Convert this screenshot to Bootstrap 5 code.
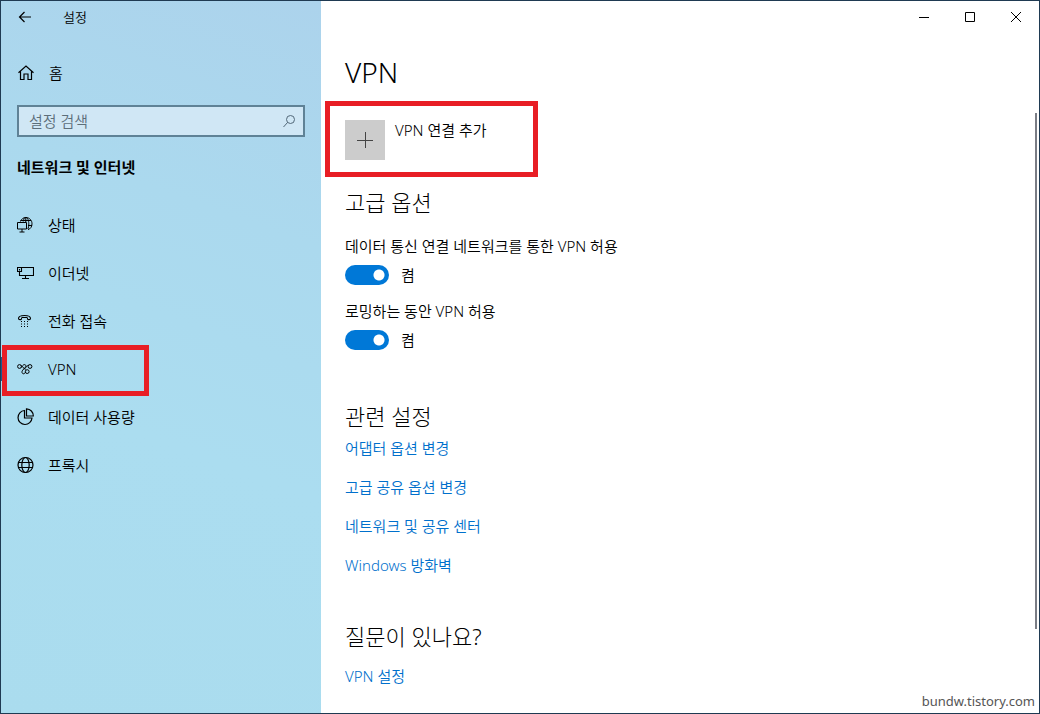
<!DOCTYPE html>
<html lang="ko">
<head>
<meta charset="utf-8">
<meta name="viewport" content="width=device-width, initial-scale=1">
<title>설정 - VPN</title>
<link href="https://cdn.jsdelivr.net/npm/bootstrap@5.3.0/dist/css/bootstrap.min.css" rel="stylesheet">
<style>
  body { font-family: "Noto Sans", "Noto Sans CJK KR", sans-serif; font-size: 15px; font-weight: 350; line-height: 24px; color: #000; background: #fff; }
  svg { display: block; flex: none; fill: none; stroke: currentColor; }
  .app-window { border: 1px solid #1f3a52; }
  .side-pane { width: 320px; background: linear-gradient(200deg, #acd3ec 0%, #abd9ee 30%, #abddf0 60%, #aadcee 100%); }
  .title-row { height: 32px; font-size: 13px; }
  .icon-btn { color: inherit; background: none; border: 0; padding: 0; font-weight: inherit; }
  .back-btn { width: 48px; height: 32px; }
  .back-title { margin-left: 14px; }
  .caption-btn { width: 46px; height: 32px; }
  .side-link { height: 48px; padding-left: 16px; gap: 14px; color: #000; text-decoration: none; }
  .search-box { height: 32px; border: 2px solid #5f8296; background: #d0e7f5; }
  .search-box input { color: #000; background: none; border: 0; outline: 0; padding: 0 10px; font-weight: inherit; }
  .search-box input::placeholder { color: #5c6e7a; opacity: 1; }
  .side-heading { font-size: 15px; font-weight: 700; height: 60px; }
  .frame { position: absolute; border: 5px solid #e81e25; pointer-events: none; }
  .frame-nav { inset: 0 auto -3px 1px; width: 147px; }
  .frame-add { inset: -19px auto -17px -20px; width: 213px; }
  .active-bar { position: absolute; left: 0; top: 12px; width: 4px; height: 24px; background: #165c93; }
  .content-pane { padding: 19px 24px 16px; }
  h1 { font-size: 28px; font-weight: 350; line-height: 40px; }
  h2 { font-size: 22px; font-weight: 300; line-height: 32px; margin: 0; }
  .add-tile { width: 40px; height: 40px; background: #ccc; }
  .add-btn { gap: 10px; margin: 28px 0 26px; line-height: 20px; }
  .switch-row { height: 34px; gap: 12px; }
  .switch-row .form-check-input { width: 44px; height: 20px; margin: 0; border: 0; background: #0078d7 radial-gradient(circle at 34px 10px, #fff 5px, transparent 6px); border-radius: 10px; }
  .option { margin-bottom: 7px; }
  .pane-section { margin-bottom: 43px; }
  .links { gap: 15px; }
  .links a { color: #0070cc; text-decoration: none; }
  .help-links { margin-top: 12px; }
  .scroll-thumb { position: absolute; right: 2px; top: 112px; bottom: 84px; width: 2px; background: #7a7d85; }
  .watermark { position: absolute; right: 4px; bottom: 0; font-size: 13px; font-weight: 400; color: #555; }
</style>
</head>
<body>
<div class="app-window d-flex min-vh-100 position-relative">
  <aside class="side-pane flex-shrink-0">
    <header class="title-row d-flex align-items-center">
      <button class="icon-btn back-btn d-flex align-items-center justify-content-center" aria-label="뒤로">
        <svg width="14" height="12" viewBox="0 0 14 12" stroke-width="1.2"><path d="M13 6H1.500M6.500 1l-5 5 5 5"/></svg>
      </button>
      <span class="back-title">설정</span>
    </header>
    <a href="#" class="side-link d-flex align-items-center mt-3">
      <svg width="18" height="18" viewBox="0 0 18 18" stroke-width="1.2"><path d="M1.500 8.700 9 2l7.500 6.700M3.500 7.500v8h3.500v-5.500h4v5.500h3.500v-8"/></svg>
      <span>홈</span>
    </a>
    <div class="search-box d-flex align-items-center mx-3 mt-2">
      <input type="search" class="flex-grow-1 w-100" placeholder="설정 검색" aria-label="설정 검색">
      <button class="icon-btn me-2" aria-label="검색">
        <svg width="12" height="13" viewBox="0 0 12 13" style="stroke:#526878"><circle cx="7.500" cy="4.500" r="4"/><path d="M4.700 7.300.5 12"/></svg>
      </button>
    </div>
    <div class="side-heading d-flex align-items-center px-3 mb-1">네트워크 및 인터넷</div>
    <nav>
      <a href="#" class="side-link d-flex align-items-center">
        <svg width="17" height="18" viewBox="0 0 17 18"><path d="M3.500 5.500C4.500 3 6.300 1.500 8.800 1.500c3.700 0 6.200 2.800 6.200 6.300 0 3-1.500 5-4 5.900M6.200 5.500c.5-2.500 1.300-4 2.600-4 1.800 0 3 2.800 3 6.300 0 2.200-.3 4-1 5.200M3.500 4.500h10.500M11 9.500h4M8.800 1.500V6M.5 6.500h9v6.500h-9zM5 13v3M2.500 16h5"/></svg>
        <span>상태</span>
      </a>
      <a href="#" class="side-link d-flex align-items-center">
        <svg width="17" height="18" viewBox="0 0 17 18" stroke-width="1.100"><path d="M5 3.500h11.500v8h-14V8M.5 3.500h4v4h-4zM2.500 5v1.500M8.500 12v2.500M5 14.500h7"/></svg>
        <span>이더넷</span>
      </a>
      <a href="#" class="side-link d-flex align-items-center">
        <svg width="17" height="18" viewBox="0 0 17 18" stroke-width="1.100"><path d="M1.500 6.500C1.500 4.500 4 3.500 7.500 3.500s6 1 6 3c0 1.500-3 1.500-3 .3 0-.8-.2-1.300-.7-1.300H5.200c-.5 0-.7.5-.7 1.300 0 1.200-3 1.200-3-.3z"/><path stroke-dasharray="1 2" d="M4 9.500h8M4 12h8M4 14.500h8"/></svg>
        <span>전화 접속</span>
      </a>
      <a href="#" class="side-link d-flex align-items-center position-relative" aria-current="page">
        <span class="active-bar"></span>
        <svg width="17" height="18" viewBox="0 0 17 18"><circle cx="2.500" cy="6.500" r="1.900"/><circle cx="13" cy="6.500" r="1.900"/><path d="M4.200 7.300C5.500 6.500 5.800 4.600 7.500 4.600c1.500 0 1.800 1.600.8 2.700L5.700 10.200c-1.400 1.700-.6 3.600.9 3.600 1.200 0 1.600-1.200 2-2.200M11.500 5.200C9.800 5.600 9 7.500 7.500 9M4 5.300l4.500 4.500"/><circle cx="10.200" cy="11.600" r="1.900"/></svg>
        <span>VPN</span>
        <span class="frame frame-nav"></span>
      </a>
      <a href="#" class="side-link d-flex align-items-center">
        <svg width="17" height="18" viewBox="0 0 17 18" stroke-width="1.200"><path d="M7.500 2.500a7 7 0 1 0 7.500 7.500H7.500zM9.500.8V8h6.800C16.300 4 13.500 1 9.500.8z"/></svg>
        <span>데이터 사용량</span>
      </a>
      <a href="#" class="side-link d-flex align-items-center">
        <svg width="17" height="18" viewBox="0 0 17 18" stroke-width="1.200"><circle cx="8.500" cy="9" r="7.500"/><ellipse cx="8.500" cy="9" rx="3.700" ry="7.500"/><path d="M1.700 6.500h13.600M1.700 11.500h13.600"/></svg>
        <span>프록시</span>
      </a>
    </nav>
  </aside>

  <div class="flex-grow-1">
    <div class="title-row d-flex justify-content-end">
      <button class="icon-btn caption-btn d-flex align-items-center justify-content-center" aria-label="최소화"><svg width="10" height="10" viewBox="0 0 10 10"><path d="M0 5.500h10"/></svg></button>
      <button class="icon-btn caption-btn d-flex align-items-center justify-content-center" aria-label="최대화"><svg width="10" height="10" viewBox="0 0 10 10"><path d="M.5.5h9v9h-9z"/></svg></button>
      <button class="icon-btn caption-btn d-flex align-items-center justify-content-center" aria-label="닫기"><svg width="10" height="10" viewBox="0 0 10 10"><path d="m0 0 10 10M10 0 0 10"/></svg></button>
    </div>
    <main class="content-pane">
      <h1 class="m-0">VPN</h1>
      <button class="icon-btn add-btn d-flex align-items-start position-relative">
        <span class="add-tile d-flex align-items-center justify-content-center">
          <svg width="16" height="16" viewBox="0 0 16 16" style="stroke:#444"><path d="M0 8.500h16M8.500 0v16"/></svg>
        </span>
        <span>VPN 연결 추가</span>
        <span class="frame frame-add"></span>
      </button>

      <section class="pane-section">
        <h2 class="mb-3">고급 옵션</h2>
        <div class="option">
          <label for="metered">데이터 통신 연결 네트워크를 통한 VPN 허용</label>
          <div class="switch-row d-flex align-items-center">
            <input class="form-check-input" type="checkbox" role="switch" id="metered" checked>
            <label for="metered">켬</label>
          </div>
        </div>
        <div class="option">
          <label for="roaming">로밍하는 동안 VPN 허용</label>
          <div class="switch-row d-flex align-items-center">
            <input class="form-check-input" type="checkbox" role="switch" id="roaming" checked>
            <label for="roaming">켬</label>
          </div>
        </div>
      </section>

      <section class="pane-section">
        <h2 class="mb-1">관련 설정</h2>
        <div class="links d-flex flex-column align-items-start">
          <a href="#">어댑터 옵션 변경</a>
          <a href="#">고급 공유 옵션 변경</a>
          <a href="#">네트워크 및 공유 센터</a>
          <a href="#">Windows 방화벽</a>
        </div>
      </section>

      <section>
        <h2>질문이 있나요?</h2>
        <div class="links help-links"><a href="#">VPN 설정</a></div>
      </section>
    </main>
  </div>
  <div class="scroll-thumb"></div>
  <div class="watermark">bundw.tistory.com</div>
</div>
<script src="https://cdn.jsdelivr.net/npm/bootstrap@5.3.0/dist/js/bootstrap.bundle.min.js"></script>
</body>
</html>
